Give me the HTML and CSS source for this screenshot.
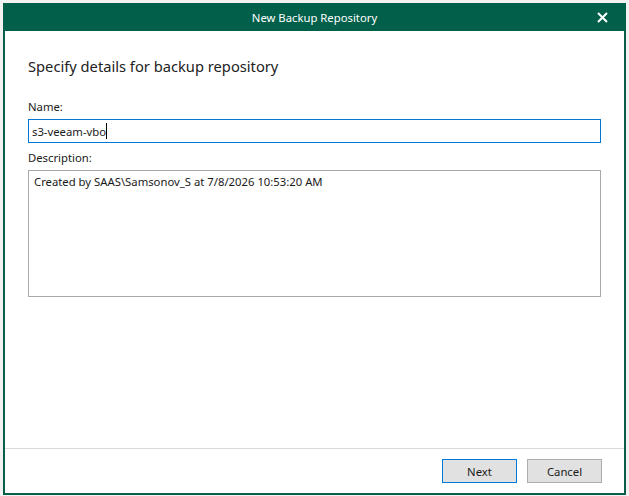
FILE: index.html
```html
<!DOCTYPE html>
<html lang="en">
<head>
    <meta charset="utf-8">
    <title>New Backup Repository</title>
    <link rel="stylesheet" href="styles.css">
</head>
<body>
    <div class="dialog">
        <div class="titlebar">
            <span class="title">New Backup Repository</span>
            <span class="close">
                <svg width="11" height="11" viewBox="0 0 11 11">
                    <path d="M1 1 L10 10 M10 1 L1 10" stroke="#fff" stroke-width="2"/>
                </svg>
            </span>
        </div>
        <div class="content">
            <h1>Specify details for backup repository</h1>
            <label class="label" for="name">Name:</label>
            <div class="field active" id="name">s3-veeam-vbo<span class="caret"></span></div>
            <label class="label" for="desc">Description:</label>
            <div class="field area" id="desc">Created by SAAS\Samsonov_S at 7/8/2026 10:53:20 AM</div>
        </div>
        <div class="footer">
            <button class="btn default">Next</button>
            <button class="btn">Cancel</button>
        </div>
    </div>
</body>
</html>
```

FILE: styles.css
```css
body {
    margin: 0;
    background: #f2f2f2;
    font-family: "Noto Sans", "Open Sans", sans-serif;
    font-size: 11.3px;
    color: #1a1a1a;
}
.dialog {
    margin: 3px 0 0 3px;
    width: 623px;
    height: 492px;
    box-sizing: border-box;
    background: #fff;
    border: 2px solid #0b5e47;
    border-top: none;
    display: flex;
    flex-direction: column;
}
.titlebar {
    height: 28px;
    margin: 0 -2px;
    background: #02604a;
    color: #fff;
    display: flex;
    align-items: center;
    justify-content: center;
    position: relative;
}
.title {
    font-size: 11.3px;
}
.close {
    position: absolute;
    right: 18px;
    top: 9px;
    display: flex;
}
.content {
    flex: 1;
    padding: 0 23px;
}
h1 {
    font-weight: normal;
    font-size: 14.7px;
    margin: 25px 0 23px 0;
    color: #222;
}
.label {
    display: block;
    margin-bottom: 5px;
}
.field {
    border: 1px solid #a9a9a9;
    height: 24px;
    box-sizing: border-box;
    padding: 3px 3px;
    margin-bottom: 7px;
    display: flex;
    align-items: flex-start;
}
.field.active {
    border-color: #0078d7;
    align-items: center;
    padding: 0 3px;
}
.caret {
    display: inline-block;
    width: 1px;
    height: 16px;
    background: #000;
}
.field.area {
    height: 127px;
    padding: 3px 5px;
}
.footer {
    border-top: 1px solid #d9d9d9;
    height: 44px;
    display: flex;
    justify-content: flex-end;
    align-items: center;
    gap: 10px;
    padding-right: 22px;
}
.btn {
    width: 75px;
    height: 24px;
    background: #e1e1e1;
    border: 1px solid #adadad;
    font-family: inherit;
    font-size: 11.3px;
    color: #1a1a1a;
    padding: 0;
}
.btn.default {
    border-color: #0078d7;
}
```
